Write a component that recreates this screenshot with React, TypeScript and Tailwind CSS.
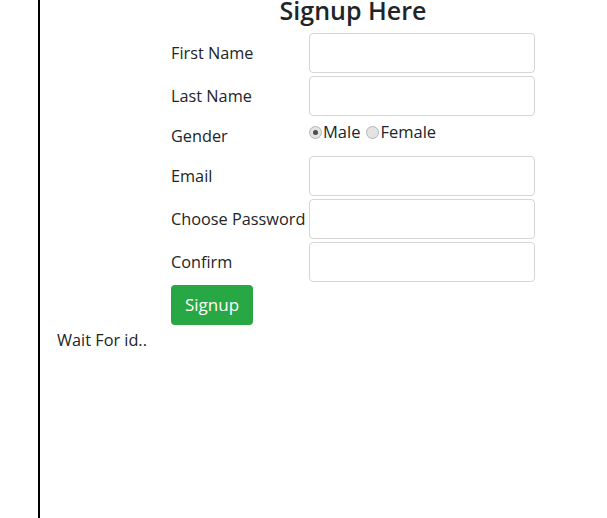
import React from 'react';

const rows = [
  { label: 'First Name', type: 'text' },
  { label: 'Last Name', type: 'text' },
];

const rows2 = [
  { label: 'Email', type: 'email' },
  { label: 'Choose Password', type: 'password' },
  { label: 'Confirm', type: 'password' },
];

function Field({ label, type }: { label: string; type: string }) {
  return (
    <div className="flex items-center h-[43px]">
      <span className="w-[138px] shrink-0 pt-[2px]">{label}</span>
      <input
        type={type}
        className="w-[226px] h-[40px] border border-[#d6d6d6] rounded-[4px] bg-white outline-none px-3"
      />
    </div>
  );
}

function Radio({ checked, label }: { checked?: boolean; label: string }) {
  return (
    <span className="flex items-center">
      <span className="w-[13px] h-[13px] rounded-full border border-[#b5b5b5] bg-[#e3e3e3] flex items-center justify-center mr-px">
        {checked && <span className="w-[5px] h-[5px] rounded-full bg-[#4d4d4d]" />}
      </span>
      {label}
    </span>
  );
}

export default function App() {
  return (
    <div className="flex h-[518px] w-[607px] bg-white text-[#212529] text-[16.3px] font-['Open_Sans',sans-serif]">
      <div className="w-[38px] shrink-0" />
      <div className="w-[2px] bg-black shrink-0" />
      <div className="flex-1 pl-[17px]">
        <div className="ml-[114px] w-[364px]">
          <h1 className="text-center text-[25px] font-semibold leading-[18px] pt-[1px] mb-[12px]">Signup Here</h1>
          {rows.map(r => (
            <Field key={r.label} label={r.label} type={r.type} />
          ))}
          <div className="flex h-[37px]">
            <span className="w-[138px] shrink-0 self-center pt-[2px]">Gender</span>
            <div className="flex gap-[6px] pt-[3px] h-fit text-[16.5px]">
              <Radio checked label="Male" />
              <Radio label="Female" />
            </div>
          </div>
          {rows2.map(r => (
            <Field key={r.label} label={r.label} type={r.type} />
          ))}
          <button className="mt-[2px] w-[82px] h-[40px] bg-[#28a745] text-white text-[17px] rounded-[4px]">
            Signup
          </button>
        </div>
        <p className="mt-[4px] leading-[22px]">Wait For id..</p>
      </div>
    </div>
  );
}
